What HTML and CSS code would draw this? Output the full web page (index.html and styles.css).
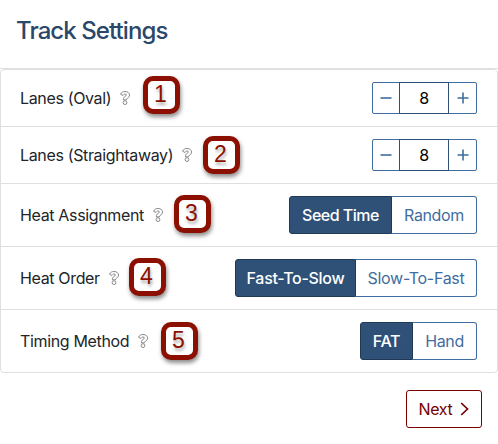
FILE: index.html
```html
<!DOCTYPE html>
<html lang="en">
<head>
    <meta charset="UTF-8">
    <meta name="viewport" content="width=device-width, initial-scale=1.0">
    <title>Track Settings</title>
    <link rel="stylesheet" href="styles.css">
</head>
<body>

    <!-- Shared help icon -->
    <svg class="sprite">
        <symbol id="help" viewBox="0 0 10 14">
            <path d="M.5 3.200C1.300 1.400 2.900.5 5 .5c2.700 0 4.500 1.400 4.500 3.500 0 1.800-1.100 2.700-2.300 3.400-.6.400-.7.7-.7 1.400H3.400c0-1.900.5-2.700 1.700-3.400.8-.5 1.300-.8 1.300-1.400 0-.6-.6-1-1.400-1-.9 0-1.400.5-2 1.500z"/>
            <circle cx="5" cy="11.600" r="1.900"/>
        </symbol>
    </svg>

    <div class="modal">
        <div class="modal-header">
            <h2>Track Settings</h2>
        </div>

        <div class="settings">
            <div class="setting">
                <span class="label">Lanes (Oval)</span>
                <svg class="help"><use href="#help"/></svg>
                <span class="step step-1">1</span>
                <div class="counter">
                    <button aria-label="Fewer lanes"><svg viewBox="0 0 12 12"><path d="M.5 6h11"/></svg></button>
                    <input type="text" value="8">
                    <button aria-label="More lanes"><svg viewBox="0 0 12 12"><path d="M.5 6h11M6 .5v11"/></svg></button>
                </div>
            </div>

            <div class="setting">
                <span class="label">Lanes (Straightaway)</span>
                <svg class="help"><use href="#help"/></svg>
                <span class="step step-2">2</span>
                <div class="counter">
                    <button aria-label="Fewer lanes"><svg viewBox="0 0 12 12"><path d="M.5 6h11"/></svg></button>
                    <input type="text" value="8">
                    <button aria-label="More lanes"><svg viewBox="0 0 12 12"><path d="M.5 6h11M6 .5v11"/></svg></button>
                </div>
            </div>

            <div class="setting">
                <span class="label">Heat Assignment</span>
                <svg class="help"><use href="#help"/></svg>
                <span class="step step-3">3</span>
                <div class="toggle assignment">
                    <button class="active">Seed Time</button>
                    <button>Random</button>
                </div>
            </div>

            <div class="setting">
                <span class="label">Heat Order</span>
                <svg class="help"><use href="#help"/></svg>
                <span class="step step-4">4</span>
                <div class="toggle order">
                    <button class="active">Fast-To-Slow</button>
                    <button>Slow-To-Fast</button>
                </div>
            </div>

            <div class="setting">
                <span class="label">Timing Method</span>
                <svg class="help"><use href="#help"/></svg>
                <span class="step step-5">5</span>
                <div class="toggle timing">
                    <button class="active">FAT</button>
                    <button>Hand</button>
                </div>
            </div>
        </div>

        <div class="modal-footer">
            <button class="next">Next <svg viewBox="0 0 9 14"><path d="M1.200 1l6.300 6-6.300 6"/></svg></button>
        </div>
    </div>

</body>
</html>
```

FILE: styles.css
```css
* {
    margin: 0;
    padding: 0;
    box-sizing: border-box;
}

body {
    font-family: Inter, "Liberation Sans", sans-serif;
    font-size: 16px;
    letter-spacing: -0.35px;
    color: #212529;
    background-color: white;
    overflow: hidden;
}

button, input {
    font: inherit;
    letter-spacing: inherit;
}

svg {
    fill: none;
    stroke: currentColor;
}

.sprite {
    display: none;
}

.modal {
    width: 100%;
    height: 444px;
}

.modal-header {
    height: 69px;
    padding: 16px;
    border-bottom: 1px solid #dee2e6;
}

.modal-header h2 {
    font-size: 24px;
    font-weight: 500;
    line-height: 30px;
    letter-spacing: -0.92px;
    color: #2a4869;
}

.settings {
    border: 1px solid #dfdfdf;
    border-radius: 4px;
}

.setting {
    position: relative;
    display: flex;
    align-items: center;
    height: 63px;
    padding: 0 20px 0 19px;
    border-bottom: 1px solid #dfdfdf;
}

.setting:nth-child(-n+2) {
    height: 57px;
}

.setting:last-child {
    height: 62px;
    border-bottom: none;
}

.help {
    width: 10px;
    height: 14px;
    margin-left: 9px;
    stroke: #7d7d7d;
    stroke-width: 0.9;
}

/* Numbered callouts */
.step {
    position: absolute;
    width: 37px;
    height: 38px;
    padding-right: 2px;
    border: 5px solid #8b1001;
    border-radius: 10px;
    background-color: white;
    box-shadow: 1px 3px 4px rgba(0, 0, 0, 0.45);
    color: #8b1001;
    font-family: "Liberation Sans", Arial, sans-serif;
    font-size: 23px;
    line-height: 27px;
    letter-spacing: 0;
    text-align: center;
    text-shadow: 1px 3px 3px rgba(0, 0, 0, 0.3);
}

.step-1 {
    left: 142px;
    top: 6px;
}

.step-2 {
    left: 202px;
    top: 9px;
}

.step-3 {
    left: 173px;
    top: 11px;
}

.step-4 {
    left: 128px;
    top: 11px;
}

.step-5 {
    left: 160px;
    top: 12px;
}

.counter, .toggle {
    display: flex;
    margin-left: auto;
}

.counter button {
    display: flex;
    align-items: center;
    justify-content: center;
    width: 28px;
    height: 32px;
    border: 1px solid #3f6d9f;
    border-radius: 2px 0 0 2px;
    background-color: white;
    color: #3f6d9f;
}

.counter button:last-child {
    width: 29px;
    border-radius: 0 2px 2px 0;
}

.counter svg {
    width: 12px;
    height: 12px;
    stroke-width: 1.6;
}

.counter input {
    width: 50px;
    height: 32px;
    margin: 0 -1px;
    border: 1px solid #2f5177;
    text-align: center;
    color: black;
    z-index: 1;
}

.toggle button {
    height: 38px;
    border: 1px solid #3f6d9f;
    border-left: none;
    border-radius: 0 3px 3px 0;
    background-color: white;
    color: #3f6d9f;
}

.toggle .active {
    border: 1px solid #203a56;
    border-radius: 3px 0 0 3px;
    background-color: #2f5177;
    color: white;
    font-weight: 500;
}

.assignment .active {
    width: 103px;
    letter-spacing: -0.5px;
}

.assignment button {
    width: 85px;
}

.order button {
    width: 121px;
    letter-spacing: -0.3px;
}

.timing .active {
    width: 53px;
}

.timing button {
    width: 64px;
}

.modal-footer {
    display: flex;
    justify-content: flex-end;
    padding: 17px 16px;
}

.next {
    display: flex;
    align-items: center;
    justify-content: center;
    width: 76px;
    height: 38px;
    border: 1px solid #750000;
    border-radius: 3px;
    background-color: white;
    color: #750000;
}

.next svg {
    width: 9px;
    height: 14px;
    margin-left: 8px;
    stroke-width: 1.7;
}
```
